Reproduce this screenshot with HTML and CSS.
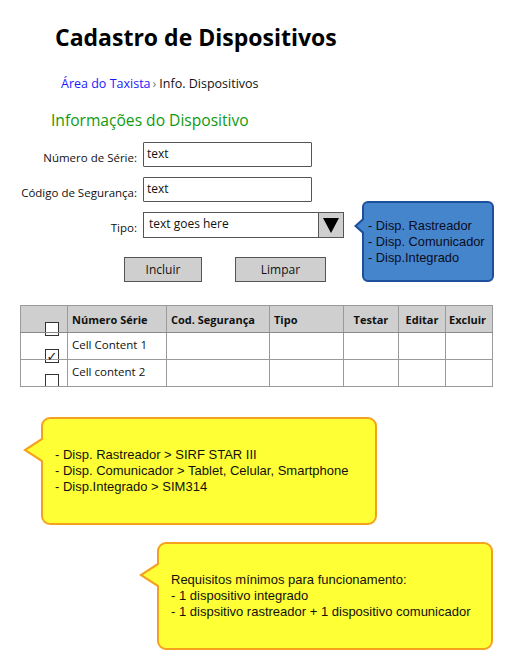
FILE: index.html
```html
<!DOCTYPE html>
<html lang="pt">
<head>
<meta charset="utf-8">
<title>Cadastro de Dispositivos</title>
<link rel="stylesheet" href="styles.css">
</head>
<body>
<div class="page">
  <h1 class="title">Cadastro de Dispositivos</h1>
  <nav class="crumbs"><a class="crumb-link" href="#">Área do Taxista</a><span class="crumb-sep">›</span><span class="crumb-current">Info. Dispositivos</span></nav>
  <h2 class="section">Informações do Dispositivo</h2>

  <div class="form-area">
    <div class="form">
      <label class="label">Número de Série:</label>
      <div class="input">text</div>
      <label class="label">Código de Segurança:</label>
      <div class="input">text</div>
      <label class="label">Tipo:</label>
      <div class="select"><span class="select-text">text goes here</span><span class="select-btn"><span class="arrow"></span></span></div>
      <div class="buttons">
        <div class="btn btn-incluir">Incluir</div>
        <div class="btn btn-limpar">Limpar</div>
      </div>
    </div>
    <div class="note note-blue">
      <div>- Disp. Rastreador</div>
      <div>- Disp. Comunicador</div>
      <div>- Disp.Integrado</div>
    </div>
  </div>

  <table class="grid">
    <thead>
      <tr>
        <th class="c-check"><span class="box"></span></th>
        <th class="c-num">Número Série</th>
        <th class="c-cod">Cod. Segurança</th>
        <th class="c-tipo">Tipo</th>
        <th class="c-testar">Testar</th>
        <th class="c-editar">Editar</th>
        <th class="c-excluir">Excluir</th>
      </tr>
    </thead>
    <tbody>
      <tr>
        <td class="c-check"><span class="box checked">✓</span></td>
        <td>Cell Content 1</td>
        <td></td><td></td><td></td><td></td><td></td>
      </tr>
      <tr>
        <td class="c-check"><span class="box box-last"></span></td>
        <td>Cell content 2</td>
        <td></td><td></td><td></td><td></td><td></td>
      </tr>
    </tbody>
  </table>

  <div class="note note-yellow note-1">
    <div>- Disp. Rastreador &gt; SIRF STAR III</div>
    <div>- Disp. Comunicador &gt; Tablet, Celular, Smartphone</div>
    <div>- Disp.Integrado &gt; SIM314</div>
  </div>

  <div class="note note-yellow note-2">
    <div>Requisitos mínimos para funcionamento:</div>
    <div>- 1 dispositivo integrado</div>
    <div>- 1 dispsitivo rastreador + 1 dispositivo comunicador</div>
  </div>
</div>
</body>
</html>
```

FILE: styles.css
```css
* { box-sizing: border-box; }
html, body { margin: 0; padding: 0; background: #fff; }
body {
  font-family: "Open Sans", "DejaVu Sans", sans-serif;
  color: #111;
  width: 514px;
}
.page { padding-top: 22px; padding-bottom: 20px; }

.title {
  margin: 0 0 0 55px;
  font-size: 23px;
  line-height: 30px;
  font-weight: 700;
  color: #000;
}

.crumbs {
  margin: 24px 0 0 61px;
  font-size: 12.5px;
  line-height: 16px;
  display: flex;
  align-items: center;
}
.crumb-link { color: #1a1aff; text-decoration: none; }
.crumb-sep { color: #777; margin: 0 3px 0 2px; }
.crumb-current { color: #111; }

.section {
  margin: 18px 0 0 51px;
  font-size: 15.6px;
  line-height: 20px;
  font-weight: 400;
  color: #109a10;
}

.form-area {
  display: flex;
  align-items: flex-start;
  margin-top: 12px;
}
.form {
  display: grid;
  grid-template-columns: 137px 201px;
  column-gap: 6px;
  row-gap: 10px;
  width: 344px;
}
.label {
  font-size: 11.5px;
  height: 25px;
  display: flex;
  align-items: center;
  justify-content: flex-end;
  padding-top: 6px;
  color: #111;
}
.input {
  width: 169px;
  height: 25px;
  border: 1.5px solid #555;
  border-radius: 1px;
  font-size: 12px;
  padding: 3px 3px;
  line-height: 16px;
}
.select {
  width: 201px;
  height: 26px;
  border: 1.5px solid #555;
  display: flex;
  font-size: 12px;
}
.select-text { flex: 1; padding: 3px 5px; line-height: 16px; }
.select-btn {
  width: 25px;
  background: #cfcfcf;
  border-left: 1.5px solid #555;
  display: flex;
  align-items: center;
  justify-content: center;
}
.arrow {
  width: 0; height: 0;
  border-left: 8px solid transparent;
  border-right: 8px solid transparent;
  border-top: 15px solid #000;
}
.buttons {
  grid-column: 1 / -1;
  display: flex;
  margin: 9px 0 0 124px;
  gap: 33px;
}
.btn {
  height: 25px;
  background: #cfcfcf;
  border: 1.5px solid #555;
  font-size: 12px;
  display: flex;
  align-items: center;
  justify-content: center;
}
.btn-incluir { width: 78px; }
.btn-limpar { width: 91px; }

.note {
  font-family: "Liberation Sans", Arial, sans-serif;
  font-size: 13px;
  line-height: 16px;
  position: relative;
  display: flex;
  flex-direction: column;
  justify-content: center;
  color: #111;
}
.note::before, .note::after {
  content: "";
  position: absolute;
  width: 0; height: 0;
  border-style: solid;
  border-color: transparent;
}

.note-blue {
  margin: 59px 0 0 18px;
  width: 132px;
  height: 81px;
  background: #4585cc;
  border: 2px solid #1d4f9c;
  border-radius: 6px;
  padding-left: 4px;
  font-size: 12.8px;
  color: #0c0c1c;
}
.note-blue::before {
  left: -10px; top: 14px;
  border-width: 9px 10px 9px 0;
  border-right-color: #1d4f9c;
}
.note-blue::after {
  left: -7px; top: 16px;
  border-width: 7px 8px 7px 0;
  border-right-color: #4585cc;
}

.grid {
  margin: 23px 0 0 20px;
  width: 472px;
  border-collapse: collapse;
  font-size: 11.5px;
  table-layout: fixed;
}
.grid th, .grid td {
  border: 1px solid #9a9a9a;
  height: 27px;
  padding: 0 0 0 4px;
  text-align: left;
  vertical-align: middle;
  white-space: nowrap;
  overflow: visible;
}
.grid thead th {
  background: #cfcfcf;
  font-weight: 700;
  font-size: 11px;
  border-bottom: 1.5px solid #888;
}
.grid td { padding-top: 0; padding-bottom: 4px; }
.c-check { width: 47px; }
.c-num { width: 99px; }
.c-cod { width: 103px; }
.c-tipo { width: 74px; }
.c-testar { width: 55px; }
.c-editar { width: 47px; }
.c-excluir { width: 47px; }
.grid th.c-testar, .grid th.c-editar { text-align: center; padding: 0; }
.grid th.c-excluir { padding: 0 0 0 3px; }
.grid .c-check { padding: 0; vertical-align: bottom; }
.box {
  display: block;
  width: 14px; height: 14px;
  margin: 0 0 -4px 24px;
  border: 1.3px solid #333;
  background: #fff;
  font-size: 13px;
  line-height: 12px;
  text-align: center;
  font-weight: 400;
  color: #222;
}
.box-last { height: 12px; margin-bottom: 0; border-bottom: none; }

.note-yellow {
  background: #ffff35;
  border: 2px solid #f4a21d;
  border-radius: 9px;
  width: 336px;
  height: 108px;
  padding-left: 12px;
  color: #111;
}
.note-yellow::before {
  left: -20px; top: 18px;
  border-width: 13px 20px 13px 0;
  border-right-color: #f4a21d;
}
.note-yellow::after {
  left: -16px; top: 20px;
  border-width: 11px 17px 11px 0;
  border-right-color: #ffff35;
}
.note-1 { margin: 30px 0 0 41px; }
.note-2 { margin: 17px 0 0 157px; }
```
